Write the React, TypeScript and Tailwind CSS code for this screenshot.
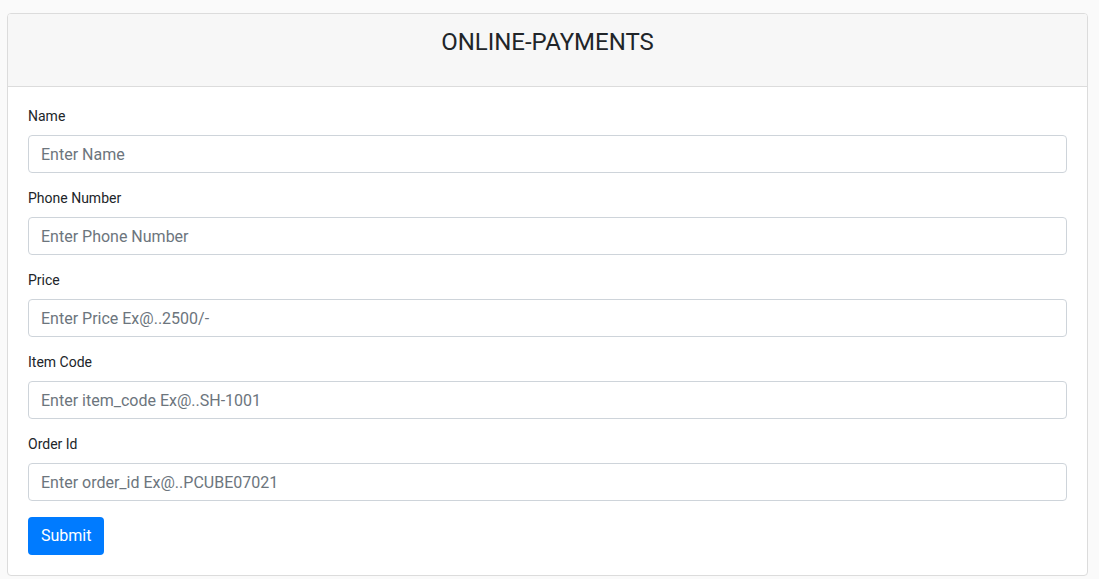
import React from "react";

const fields = [
  { label: "Name", placeholder: "Enter Name" },
  { label: "Phone Number", placeholder: "Enter Phone Number" },
  { label: "Price", placeholder: "Enter Price Ex@..2500/-" },
  { label: "Item Code", placeholder: "Enter item_code Ex@..SH-1001" },
  { label: "Order Id", placeholder: "Enter order_id Ex@..PCUBE07021" },
];

export default function App() {
  return (
    <div className="min-h-screen w-full bg-[#fafafa] pt-[13px] pl-[7px] font-['Roboto',sans-serif] text-[#212529]">
      <div className="w-[1081px] overflow-hidden rounded-[4px] border border-[#dcdcdc] bg-white">
        <div className="flex h-[73px] items-start justify-center border-b border-[#dcdcdc] bg-[#f7f7f7] pt-[14px]">
          <h3 className="text-[24px] leading-[28px] font-normal">ONLINE-PAYMENTS</h3>
        </div>
        <form className="px-[20px] pt-[19px] pb-[20px]" onSubmit={(e) => e.preventDefault()}>
          {fields.map((f) => (
            <div key={f.label} className="mb-[15px] flex flex-col">
              <label className="mb-[8px] text-[14px] leading-[21px]">{f.label}</label>
              <input
                type="text"
                placeholder={f.placeholder}
                className="h-[38px] w-full rounded-[4px] border border-[#ced4da] bg-white px-[12px] text-[16px] text-[#495057] placeholder:text-[#6c757d] outline-none"
              />
            </div>
          ))}
          <button
            type="submit"
            className="mt-[1px] h-[38px] rounded-[4px] bg-[#007bff] px-[13px] text-[16px] text-white"
          >
            Submit
          </button>
        </form>
      </div>
    </div>
  );
}
